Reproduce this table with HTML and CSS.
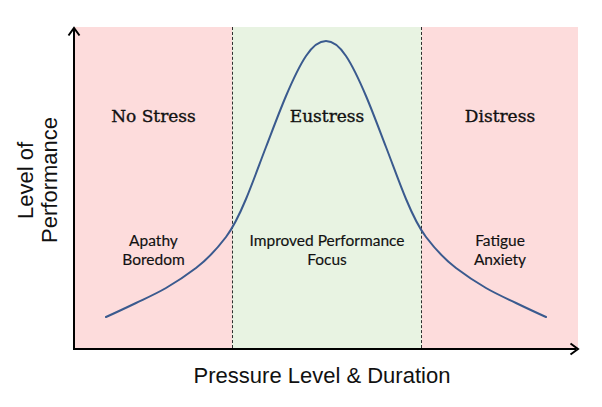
FILE: index.html
```html
<!DOCTYPE html>
<html lang="en">
<head>
<meta charset="utf-8">
<title>Stress and Performance</title>
<link rel="stylesheet" href="styles.css">
</head>
<body>
<div class="figure">
  <div class="y-title"><span class="y-label">Level of<br>Performance</span></div>
  <div class="zone zone-low">
    <div class="zone-title">No Stress</div>
    <div class="zone-note">Apathy<br>Boredom</div>
  </div>
  <div class="zone zone-mid">
    <div class="zone-title">Eustress</div>
    <div class="zone-note">Improved Performance<br>Focus</div>
  </div>
  <div class="zone zone-high">
    <div class="zone-title">Distress</div>
    <div class="zone-note">Fatigue<br>Anxiety</div>
  </div>
  <div class="x-title">Pressure Level &amp; Duration</div>
  <svg class="overlay" viewBox="0 0 602 407" width="602" height="407" aria-hidden="true">
    <path class="curve" d="M106,317 C116,312.5 126,307.8 136,303 C146,298.2 156,293.8 166,288 C176,282.2 186,275.6 196,268 C206,260.4 216,250.2 226,237 C232.67,228.2 239.33,215 246,199 C252.67,183 259.33,164.3 266,147 C272.67,129.7 279.33,111.7 286,96 C292.67,80.3 299.33,66 306,56 C312.67,46 319.33,41 326,41 C332.67,41 339.33,46 346,56 C352.67,66 359.33,80.3 366,96 C372.67,111.7 379.33,129.7 386,147 C392.67,164.3 399.33,183 406,199 C412.67,215 419.33,228.2 426,237 C436,250.2 446,260.4 456,268 C466,275.6 476,282.2 486,288 C496,293.8 506,298.2 516,303 C526,307.8 536,312.5 546,317"/>
    <line class="axis" x1="74" y1="350" x2="74" y2="29"/>
    <line class="axis" x1="73" y1="349" x2="576" y2="349"/>
    <polyline class="arrow" points="68.5,35.5 74,28 79.5,35.5"/>
    <polyline class="arrow" points="570.5,343.5 578,349 570.5,354.5"/>
  </svg>
</div>
</body>
</html>
```
FILE: styles.css
```css
html, body {
  margin: 0;
  padding: 0;
  background: #ffffff;
}

.figure {
  position: relative;
  display: grid;
  grid-template-columns: 75px 157px 190px 156px;
  grid-template-rows: 321px auto;
  padding-top: 27px;
  width: 602px;
  height: 407px;
  box-sizing: border-box;
  color: #111111;
}

.y-title {
  display: flex;
  align-items: center;
  justify-content: center;
  padding-bottom: 15px;
}

.y-label {
  writing-mode: vertical-rl;
  transform: rotate(180deg);
  text-align: center;
  font-family: "Liberation Sans", Arial, sans-serif;
  font-size: 22px;
  line-height: 24px;
  white-space: nowrap;
}

.zone {
  display: flex;
  flex-direction: column;
  align-items: center;
  text-align: center;
}

.zone-low,
.zone-high {
  background: #fddcdc;
}

.zone-mid {
  background: #e8f3e2;
  border-left: 1px dashed #2e2e2e;
  border-right: 1px dashed #2e2e2e;
}

.zone-title {
  margin-top: 78px;
  font-family: "DejaVu Serif", "Liberation Serif", serif;
  font-size: 17px;
  line-height: 22px;
  -webkit-text-stroke: 0.35px #111111;
  white-space: nowrap;
}

.zone-note {
  margin-top: 104px;
  font-family: Lato, "Open Sans", sans-serif;
  font-size: 15.5px;
  line-height: 19px;
  -webkit-text-stroke: 0.15px #111111;
  white-space: nowrap;
}

.x-title {
  grid-column: 2 / 5;
  margin-top: 15px;
  padding-right: 9px;
  text-align: center;
  font-family: "Liberation Sans", Arial, sans-serif;
  font-size: 22px;
  line-height: 26px;
  white-space: nowrap;
}

.overlay {
  position: absolute;
  left: 0;
  top: 0;
  pointer-events: none;
}

.curve {
  fill: none;
  stroke: #3a5a8e;
  stroke-width: 2;
  stroke-linecap: round;
}

.axis {
  stroke: #000000;
  stroke-width: 2;
}

.arrow {
  fill: none;
  stroke: #000000;
  stroke-width: 2;
  stroke-linejoin: miter;
}
```
